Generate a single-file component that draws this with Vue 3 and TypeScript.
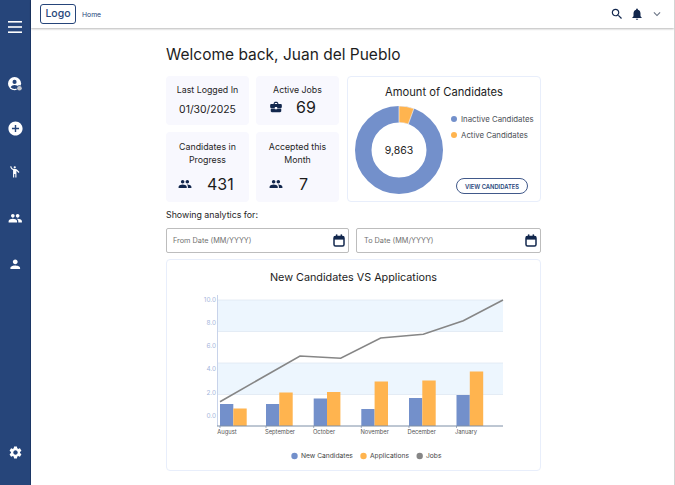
<script setup lang="ts">
const ICONS: Record<string, string> = {
  add: 'M12 2C6.48 2 2 6.48 2 12s4.48 10 10 10 10-4.48 10-10S17.52 2 12 2zm5 11h-4v4h-2v-4H7v-2h4V7h2v4h4v2z',
  wave: 'M12 2a2 2 0 1 0 0 4 2 2 0 0 0 0-4zM15.89 8.11C15.5 7.72 14.83 7 13.53 7h-2.54C8.24 6.99 6 4.75 6 2H4c0 3.16 2.11 5.84 5 6.71V22h2v-6h2v6h2V10.05L18.95 14l1.41-1.41-4.47-4.48z',
  people: 'M16 11c1.66 0 2.99-1.34 2.99-3S17.66 5 16 5c-1.66 0-3 1.34-3 3s1.34 3 3 3zm-8 0c1.66 0 2.99-1.34 2.99-3S9.66 5 8 5C6.34 5 5 6.34 5 8s1.34 3 3 3zm0 2c-2.33 0-7 1.17-7 3.5V19h14v-2.5c0-2.33-4.67-3.5-7-3.5zm8 0c-.29 0-.62.02-.97.05 1.16.84 1.97 1.97 1.97 3.45V19h6v-2.5c0-2.33-4.67-3.5-7-3.5z',
  person: 'M12 12c2.21 0 4-1.79 4-4s-1.79-4-4-4-4 1.79-4 4 1.79 4 4 4zm0 2c-2.67 0-8 1.34-8 4v2h16v-2c0-2.66-5.33-4-8-4z',
  settings: 'M19.14 12.94c.04-.3.06-.61.06-.94 0-.32-.02-.64-.07-.94l2.03-1.58c.18-.14.23-.41.12-.61l-1.92-3.32c-.12-.22-.37-.29-.59-.22l-2.39.96c-.5-.38-1.03-.7-1.62-.94l-.36-2.54c-.04-.24-.24-.41-.48-.41h-3.84c-.24 0-.43.17-.47.41l-.36 2.54c-.59.24-1.13.57-1.62.94l-2.39-.96c-.22-.08-.47 0-.59.22L2.74 8.87c-.12.21-.08.47.12.61l2.03 1.58c-.05.3-.09.63-.09.94s.02.64.07.94l-2.03 1.58c-.18.14-.23.41-.12.61l1.92 3.32c.12.22.37.29.59.22l2.39-.96c.5.38 1.03.7 1.62.94l.36 2.54c.05.24.24.41.48.41h3.84c.24 0 .44-.17.47-.41l.36-2.54c.59-.24 1.13-.56 1.62-.94l2.39.96c.22.08.47 0 .59-.22l1.92-3.32c.12-.22.07-.47-.12-.61l-2.01-1.58zM12 15.6c-1.98 0-3.6-1.62-3.6-3.6s1.62-3.6 3.6-3.6 3.6 1.62 3.6 3.6-1.62 3.6-3.6 3.6z',
  work: 'M10 16v-1H3.01L3 19c0 1.11.89 2 2 2h14c1.11 0 2-.89 2-2v-4h-7v1h-4zm10-9h-4.01V5l-2-2h-4l-2 2v2H4c-1.1 0-2 .9-2 2v3c0 1.11.89 2 2 2h6v-2h4v2h6c1.1 0 2-.9 2-2V9c0-1.1-.9-2-2-2zm-6 0h-4V5h4v2z',
  search: 'M15.5 14h-.79l-.28-.27C15.41 12.59 16 11.11 16 9.5 16 5.91 13.09 3 9.5 3S3 5.91 3 9.5 5.91 16 9.5 16c1.61 0 3.09-.59 4.23-1.57l.27.28v.79l5 4.99L20.49 19l-4.99-5zm-6 0C7.01 14 5 11.99 5 9.5S7.01 5 9.5 5 14 7.01 14 9.5 11.99 14 9.5 14z',
  bell: 'M12 22c1.1 0 2-.9 2-2h-4c0 1.1.9 2 2 2zm6-6v-5c0-3.07-1.63-5.64-4.5-6.32V4c0-.83-.67-1.5-1.5-1.5s-1.5.67-1.5 1.5v.68C7.64 5.36 6 7.92 6 11v5l-2 2v1h16v-1l-2-2z',
  chevron: 'M16.59 8.59 12 13.17 7.41 8.59 6 10l6 6 6-6z',
}

const bands = [
  { y: 41, h: 31.5 },
  { y: 104, h: 31.5 },
]
const gridLines = [41, 72.5, 104, 135.5]
const yLabels = [
  { t: '10.0', y: 40.5 },
  { t: '8.0', y: 63.5 },
  { t: '6.0', y: 87 },
  { t: '4.0', y: 110 },
  { t: '2.0', y: 133.5 },
  { t: '0.0', y: 156.5 },
]
const AXIS = 167
const months = [
  { name: 'August', lx: 61, tick: 54, bx: 54, a: 145, b: 149.5 },
  { name: 'September', lx: 114, tick: 100, bx: 100, a: 145, b: 133.5 },
  { name: 'October', lx: 158, tick: 147.7, bx: 147.7, a: 139.5, b: 133 },
  { name: 'November', lx: 208.7, tick: 195.3, bx: 195.3, a: 150, b: 122.5 },
  { name: 'December', lx: 255.7, tick: 243, bx: 243, a: 139, b: 121.5 },
  { name: 'January', lx: 300, tick: 290.5, bx: 290.5, a: 136, b: 112.5 },
]
const linePts = '54,142.7 134,97 174.7,99.3 214.7,79 257.3,75.3 297.3,61.7 337,41'
</script>

<template>
  <div class="page">
    <aside class="side">
      <svg class="menu" viewBox="0 0 14 12" aria-label="Menu">
        <rect y="0" width="14" height="1.6" />
        <rect y="5.2" width="14" height="1.6" />
        <rect y="10.4" width="14" height="1.6" />
      </svg>
      <nav class="nav">
        <span class="nav-item">
          <svg class="ico15" viewBox="0 0 16 16">
            <circle cx="7" cy="7" r="7" fill="#fff" />
            <circle cx="7" cy="5.2" r="2.2" fill="#26457a" />
            <path d="M2.8 11c.8-1.8 2.6-2.6 4.2-2.6s3.4.8 4.2 2.6A5.6 5.6 0 0 1 7 12.8 5.6 5.6 0 0 1 2.8 11z" fill="#26457a" />
            <circle cx="12.2" cy="12" r="3.2" fill="#26457a" />
            <circle cx="12.2" cy="12" r="2.5" fill="#c6c9cf" />
          </svg>
        </span>
        <span class="nav-item"><svg class="ico17" viewBox="0 0 24 24"><path :d="ICONS.add" /></svg></span>
        <span class="nav-item"><svg class="ico13" viewBox="0 0 24 24"><path :d="ICONS.wave" /></svg></span>
        <span class="nav-item shift"><svg class="ico14" viewBox="0 0 24 24"><path :d="ICONS.people" /></svg></span>
        <span class="nav-item shift"><svg class="ico14" viewBox="0 0 24 24"><path :d="ICONS.person" /></svg></span>
      </nav>
      <span class="nav-item gear"><svg class="ico15" viewBox="0 0 24 24"><path :d="ICONS.settings" /></svg></span>
    </aside>

    <div class="body">
      <header class="top">
        <div class="logo">Logo</div>
        <span class="crumb">Home</span>
        <div class="top-icons">
          <svg class="t-ico" viewBox="0 0 24 24"><path :d="ICONS.search" /></svg>
          <svg class="t-ico" viewBox="0 0 24 24"><path :d="ICONS.bell" /></svg>
          <svg class="t-ico chev" viewBox="0 0 24 24"><path :d="ICONS.chevron" /></svg>
        </div>
      </header>

      <main class="main">
        <h1 class="title">Welcome back, Juan del Pueblo</h1>

        <section class="summary">
          <div class="stats">
            <div class="stat short">
              <div class="stat-label">Last Logged In</div>
              <div class="stat-date">01/30/2025</div>
            </div>
            <div class="stat short">
              <div class="stat-label">Active Jobs</div>
              <div class="stat-val tight">
                <svg class="s-ico" viewBox="0 0 24 24"><path :d="ICONS.work" /></svg>
                <span>69</span>
              </div>
            </div>
            <div class="stat">
              <div class="stat-label">Candidates in<br />Progress</div>
              <div class="stat-val">
                <svg class="s-ico" viewBox="0 0 24 24"><path :d="ICONS.people" /></svg>
                <span>431</span>
              </div>
            </div>
            <div class="stat">
              <div class="stat-label">Accepted this<br />Month</div>
              <div class="stat-val wide">
                <svg class="s-ico" viewBox="0 0 24 24"><path :d="ICONS.people" /></svg>
                <span>7</span>
              </div>
            </div>
          </div>

          <div class="amount">
            <div class="amount-title">Amount of Candidates</div>
            <div class="amount-body">
              <div class="donut">
                <svg viewBox="0 0 88 88" class="donut-svg">
                  <circle cx="44" cy="44" r="35.75" fill="none" stroke="#7390cb" stroke-width="16.5" />
                  <path d="M44 0A44 44 0 0 1 58.9 2.6L53.3 18.1A27.5 27.5 0 0 0 44 16.5Z" fill="#ffb44f" stroke="#fff" stroke-width=".6" />
                </svg>
                <span class="donut-num">9,863</span>
              </div>
              <div class="amount-side">
                <div class="lg"><i class="dot blue"></i>Inactive Candidates</div>
                <div class="lg"><i class="dot orange"></i>Active Candidates</div>
                <button class="view" type="button">VIEW CANDIDATES</button>
              </div>
            </div>
          </div>
        </section>

        <div class="showing">Showing analytics for:</div>

        <div class="dates">
          <div class="date first">
            <span>From Date (MM/YYYY)</span>
            <svg class="cal" viewBox="0 0 12 13">
              <rect x="1" y="2.4" width="10" height="9.6" rx="1.5" fill="none" stroke="#12274d" stroke-width="1.5" />
              <rect x="1" y="2.4" width="10" height="3.2" fill="#12274d" />
              <rect x="2.9" y=".4" width="1.5" height="3" fill="#12274d" />
              <rect x="7.6" y=".4" width="1.5" height="3" fill="#12274d" />
            </svg>
          </div>
          <div class="date second">
            <span>To Date (MM/YYYY)</span>
            <svg class="cal" viewBox="0 0 12 13">
              <rect x="1" y="2.4" width="10" height="9.6" rx="1.5" fill="none" stroke="#12274d" stroke-width="1.5" />
              <rect x="1" y="2.4" width="10" height="3.2" fill="#12274d" />
              <rect x="2.9" y=".4" width="1.5" height="3" fill="#12274d" />
              <rect x="7.6" y=".4" width="1.5" height="3" fill="#12274d" />
            </svg>
          </div>
        </div>

        <section class="chart">
          <div class="chart-title">New Candidates VS Applications</div>
          <svg class="chart-svg" viewBox="0 0 375 212" width="375" height="212">
            <rect v-for="b in bands" :key="b.y" x="52" :y="b.y" width="285" :height="b.h" fill="#edf6fe" />
            <line v-for="g in gridLines" :key="g" x1="52" x2="337" :y1="g" :y2="g" stroke="#e0e8f3" stroke-width=".8" />
            <line x1="51.5" x2="51.5" y1="36" :y2="AXIS" stroke="#c8d3ea" stroke-width="1" />
            <text v-for="l in yLabels" :key="l.t" x="50" :y="l.y + 2" text-anchor="end" class="y-label">{{ l.t }}</text>
            <g v-for="m in months" :key="m.name">
              <rect :x="m.bx" :y="m.a" width="13.3" :height="AXIS - m.a" fill="#7390cb" />
              <rect :x="m.bx + 13.3" :y="m.b" width="13.4" :height="AXIS - m.b" fill="#ffb44f" />
              <line :x1="m.tick" :x2="m.tick" :y1="AXIS" :y2="AXIS + 2" stroke="#7c8ea6" stroke-width=".7" />
              <text :x="m.lx" :y="AXIS + 8" text-anchor="middle" class="x-label">{{ m.name }}</text>
            </g>
            <line x1="51" x2="337" :y1="AXIS" :y2="AXIS" stroke="#7c8ea6" stroke-width="1" />
            <polyline :points="linePts" fill="none" stroke="#868686" stroke-width="1.6" />
            <circle cx="128.5" cy="197" r="3.2" fill="#7390cb" />
            <text x="135" y="199.2" class="leg-label">New Candidates</text>
            <circle cx="197.5" cy="197" r="3.2" fill="#ffb44f" />
            <text x="204" y="199.2" class="leg-label">Applications</text>
            <circle cx="253.7" cy="197" r="3.2" fill="#868686" />
            <text x="260" y="199.2" class="leg-label">Jobs</text>
          </svg>
        </section>
      </main>
    </div>
  </div>
</template>

<style>
html, body { margin: 0; padding: 0; background: #fff; }
</style>

<style scoped>
.page {
  display: flex;
  width: 675px;
  height: 485px;
  overflow: hidden;
  background: #fff;
  box-sizing: border-box;
  border-right: 1px solid #d4d4d4;
  font-family: "Inter", "Open Sans", sans-serif;
  color: #1c1c1c;
}
.side {
  width: 31px;
  flex: none;
  box-sizing: border-box;
  background: #26457a;
  border-right: 1px solid #1c3766;
  display: flex;
  flex-direction: column;
  align-items: center;
  padding-top: 21px;
  padding-bottom: 21px;
  fill: #fff;
}
.menu { width: 14px; height: 12px; fill: #fff; }
.nav {
  display: flex;
  flex-direction: column;
  align-items: center;
  gap: 20px;
  margin-top: 39px;
}
.nav-item { width: 24px; height: 24px; display: flex; align-items: center; justify-content: center; }
.nav-item.shift { margin-top: 2px; }
.gear { margin-top: auto; }
.ico13 { width: 13.5px; height: 13.5px; }
.ico14 { width: 14.5px; height: 14.5px; }
.ico15 { width: 15px; height: 15px; }
.ico17 { width: 17px; height: 17px; }

.body { flex: 1; min-width: 0; display: flex; flex-direction: column; }
.top {
  height: 28px;
  flex: none;
  box-sizing: border-box;
  display: flex;
  align-items: center;
  padding: 0 9px 0 9px;
  background: #fff;
  box-shadow: 0 1px 2px rgba(0, 0, 0, .28);
}
.logo {
  width: 36px;
  height: 20px;
  box-sizing: border-box;
  border: 1px solid #26457a;
  border-radius: 3px;
  font-size: 10.5px;
  font-weight: 500;
  line-height: 18px;
  text-align: center;
  color: #26457a;
}
.crumb { margin-left: 6px; font-size: 6.8px; color: #26457a; }
.top-icons { margin-left: auto; display: flex; align-items: center; gap: 6px; }
.t-ico { width: 14px; height: 14px; fill: #12274d; }
.chev { fill: #6d7687; margin-right: 1px; }

.main { flex: 1; padding-left: 135px; width: 375px; }
.title {
  margin: 0;
  height: 48px;
  padding-top: 17px;
  box-sizing: border-box;
  font-size: 15.5px;
  line-height: 19px;
  font-weight: 400;
  color: #1d1d1d;
}
.summary { display: flex; gap: 8px; }
.stats {
  display: grid;
  grid-template-columns: 83px 83px;
  grid-template-rows: 49px 70px;
  gap: 7px;
}
.stat {
  background: #f8f8fe;
  border-radius: 4px;
  text-align: center;
  padding-top: 8px;
  box-sizing: border-box;
}
.stat-label { font-size: 8.8px; line-height: 13px; color: #262626; }
.stat-date { font-size: 10.4px; margin-top: 8px; line-height: 12px; color: #1c1c1c; }
.stat-val {
  display: flex;
  align-items: center;
  justify-content: flex-start;
  padding-left: 12px;
  gap: 15px;
  font-size: 16px;
  line-height: 18px;
  margin-top: 9px;
  color: #1c1c1c;
}
.stat-val.tight { margin-top: 2px; gap: 13px; padding-left: 13px; }
.stat-val.wide { gap: 16px; padding-left: 13px; }
.short { padding-top: 7px; }
.s-ico { width: 14px; height: 14px; fill: #12274d; }

.amount {
  flex: none;
  width: 194px;
  height: 126px;
  box-sizing: border-box;
  border: 1px solid #e8eefb;
  border-radius: 4px;
  padding: 8px 7px 0 7px;
}
.amount-title { font-size: 11.2px; line-height: 14px; text-align: center; color: #1d1d1d; }
.amount-body { display: flex; margin-top: 7px; }
.donut { position: relative; width: 88px; height: 88px; flex: none; }
.donut-svg { width: 88px; height: 88px; display: block; }
.donut-num {
  position: absolute;
  inset: 0;
  display: flex;
  align-items: center;
  justify-content: center;
  font-size: 10.5px;
  color: #1c1c1c;
}
.amount-side { margin-left: 8px; flex: 1; display: flex; flex-direction: column; padding-top: 5px; }
.lg {
  display: flex;
  align-items: center;
  font-size: 7.8px;
  line-height: 16px;
  color: #4b4f57;
  white-space: nowrap;
}
.dot { width: 6px; height: 6px; border-radius: 50%; margin-right: 4px; flex: none; }
.blue { background: #7390cb; }
.orange { background: #ffb44f; }
.view {
  margin-top: 35px;
  margin-left: 5px;
  width: 72px;
  height: 16px;
  padding: 0;
  box-sizing: border-box;
  background: #fff;
  border: 1px solid #41598a;
  border-radius: 8px;
  font-family: inherit;
  font-size: 5.8px;
  font-weight: 600;
  color: #26457a;
  white-space: nowrap;
}

.showing { font-size: 8.8px; line-height: 12px; margin-top: 7px; color: #262626; }
.dates { display: flex; gap: 7px; margin-top: 7px; }
.date {
  height: 25px;
  box-sizing: border-box;
  border: 1px solid #bdbdbd;
  border-radius: 2px;
  display: flex;
  align-items: center;
  justify-content: space-between;
  padding: 0 3px 0 6px;
  font-size: 7.3px;
  color: #707070;
}
.second { padding-left: 7px; }
.first { width: 183px; }
.second { width: 185px; }
.cal { width: 12px; height: 13px; }

.chart {
  position: relative;
  width: 375px;
  height: 212px;
  margin-top: 6px;
  box-sizing: border-box;
  border: 1px solid #e8eefb;
  border-radius: 4px;
}
.chart-title {
  position: absolute;
  left: 0;
  right: 0;
  top: 11px;
  font-size: 10.8px;
  line-height: 14px;
  text-align: center;
  color: #1d1d1d;
}
.chart-svg { position: absolute; left: -1px; top: -1px; display: block; }
.y-label { font-size: 6.4px; fill: #a5b6dc; }
.x-label { font-size: 5.8px; fill: #555; }
.leg-label { font-size: 6.7px; fill: #444; }
</style>
